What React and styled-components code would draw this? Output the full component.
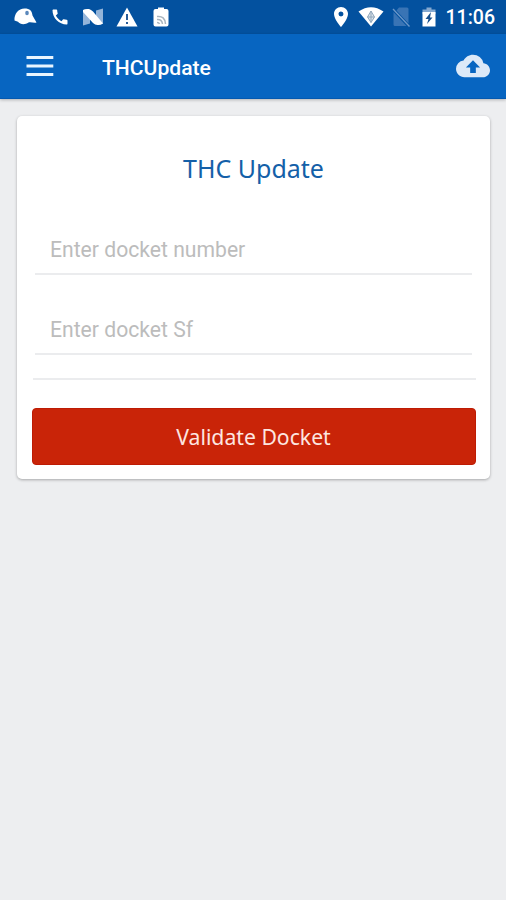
import React from "react";
import styled, { createGlobalStyle } from "styled-components";

import { MdBackup as UploadIcon } from "react-icons/md";
import { MdCall as CallIcon } from "react-icons/md";
import { MdLocationOn as LocationIcon } from "react-icons/md";

const GlobalStyle = createGlobalStyle`
  *, *::before, *::after {
    box-sizing: border-box;
  }

  body {
    margin: 0;
    background-color: #edeef0;
    font-family: "Noto Sans", sans-serif;
  }
`;

const Page = styled.div`
  min-height: 900px;
  background-color: #edeef0;
`;

const StatusBar = styled.div`
  height: 34px;
  display: flex;
  justify-content: space-between;
  padding: 0 11px 0 14px;
  background-color: #03519f;
  color: #fff;
`;

const StatusGroup = styled.div`
  display: flex;
  align-items: center;

  svg {
    display: block;
    flex: none;
  }
`;

const StatusSlot = styled.span`
  width: ${(props) => props.$width}px;
  display: flex;
  flex: none;
`;

const Clock = styled.span`
  padding-top: 2px;
  font-family: Roboto, sans-serif;
  font-size: 19.5px;
  font-weight: 500;
  line-height: 32px;
  white-space: nowrap;
`;

const Toolbar = styled.header`
  position: relative;
  height: 65px;
  display: flex;
  align-items: center;
  padding: 0 16px 0 26px;
  background-color: #0765c1;
  border-bottom: 1px solid #0459b0;
  box-shadow: 0 1px 3px rgba(0, 0, 0, 0.25);
  color: #fff;
`;

const IconButton = styled.button`
  display: flex;
  padding: 0;
  border: none;
  background: none;
  color: ${(props) => props.$color || "#fff"};
  cursor: pointer;
`;

const ToolbarTitle = styled.h1`
  flex: 1;
  margin: 0 0 0 48px;
  padding-top: 3px;
  font-family: Roboto, sans-serif;
  font-size: 21.1px;
  font-weight: 500;
  line-height: 30px;
`;

const Card = styled.main`
  margin: 17px 16px 0 17px;
  height: 363px;
  padding: 0 15px;
  background-color: #fff;
  border-radius: 5px;
  box-shadow: 0 1px 3px rgba(0, 0, 0, 0.3);
`;

const CardTitle = styled.h2`
  margin: 0;
  padding-top: 34px;
  height: 82px;
  color: #1460a8;
  font-size: 25px;
  font-weight: 400;
  line-height: 36px;
  text-align: center;
`;

const Field = styled.input`
  display: block;
  width: 437px;
  height: ${(props) => props.$height}px;
  margin-left: 3px;
  padding: ${(props) => props.$height - 50}px 15px 0;
  border: none;
  border-bottom: 2px solid #ebecee;
  outline: none;
  background: none;
  color: #333;
  font-family: Roboto, sans-serif;
  font-size: 21.15px;

  &::placeholder {
    color: #bcbcbc;
    opacity: 1;
  }
`;

const Divider = styled.hr`
  width: 443px;
  height: 2px;
  margin: 23px 0 28px 1px;
  border: none;
  background-color: #ebecee;
`;

const SubmitButton = styled.button`
  display: block;
  width: 444px;
  height: 57px;
  padding: 0 1px 0 0;
  border: 1px solid #bd1b04;
  border-radius: 4px;
  background-color: #c92408;
  color: #fde6e0;
  font-family: "Noto Sans", sans-serif;
  font-size: 21.2px;
  cursor: pointer;
`;

const CapIcon = () => (
  <svg width="24" height="18" viewBox="0 0 24 18">
    <path
      fill="#fff"
      d="M0.5 12.5C0 6 4.500 0.5 10.5 0.5C16 0.5 18 3 18.5 7.5L22.5 14.5C20 15.5 17 13.5 14.5 14.5C11 17 6 16.5 4 13.8Z"
    />
    <ellipse cx="13" cy="5" rx="1.8" ry="2.2" fill="#5b88bb" />
  </svg>
);

const NougatIcon = () => (
  <svg width="22" height="18" viewBox="0 0 22 18">
    <path fill="#93b4d9" d="M1 2L8 5V15.5L1 17.5ZM21 0.5V16L14 12V2.5Z" />
    <path
      fill="#fff"
      d="M1 2Q3 0.5 7 1Q9 1.5 11 3.5L21 15.5Q18 17.5 15.5 17Q13 17 11 15L1 4Z"
    />
  </svg>
);

const WarningIcon = () => (
  <svg width="22" height="20" viewBox="0 0 22 20">
    <path fill="#fff" d="M11 0.5L21.5 19.5H0.5Z" />
    <path fill="#285c99" d="M10 7H12V13H10ZM10 15H12V17H10Z" />
  </svg>
);

const CastBatteryIcon = () => (
  <svg width="16" height="20" viewBox="0 0 16 20">
    <path
      fill="#fff"
      d="M5 2V0.5H11V2H13.5Q15.5 2 15.5 4V17.5Q15.5 19.5 13.5 19.5H2.5Q0.5 19.5 0.5 17.5V4Q0.5 2 2.5 2Z"
    />
    <path
      fill="none"
      stroke="#a9b5bf"
      strokeWidth="1.5"
      d="M4 9.5Q12 8.500 12.5 17M4 12.500Q9 12 9.5 17M4 15.500Q6 15.500 6.500 17"
    />
  </svg>
);

const WifiIcon = () => (
  <svg width="26" height="20" viewBox="0 0 26 20">
    <path fill="#fff" d="M0.5 4.5Q13 -4 25.5 4.5L13 19.5Z" />
    <path
      fill="#dbe3ea"
      stroke="#8fa6bb"
      strokeWidth="1"
      d="M13 4L16.5 10L13 15.5L9.5 10ZM9.5 10H16.5M13 4V15.5"
    />
  </svg>
);

const NoSimIcon = () => (
  <svg width="20" height="20" viewBox="0 0 20 20">
    <path fill="#3974b5" d="M7 0.5H15Q16.5 0.5 16.5 2V16.5L4.5 3.5ZM1.5 5L14.5 19H3Q1.500 19 1.5 17.5Z" />
    <path stroke="#6d98c9" strokeWidth="1.3" d="M1 2L17.5 19.5" />
  </svg>
);

const ChargingIcon = () => (
  <svg width="14" height="20" viewBox="0 0 14 20">
    <path fill="#86a9d0" d="M4.5 0.5H9.5V2.5H13.5V7H0.5V2.5H4.5Z" />
    <path fill="#fff" d="M0.5 5H13.5V19.5H0.5Z" />
    <path fill="#174f8c" d="M9 5L3.500 12H6.500L5 17L10.500 10.500H8Z" />
  </svg>
);

const MenuIcon = () => (
  <svg width="28" height="20" viewBox="0 0 28 20">
    <path
      fill="#e9f5ff"
      d="M0.5 0H27.3V3H0.5ZM0.5 8.5H27.3V11.5H0.5ZM0.5 17H27.3V20H0.5Z"
    />
  </svg>
);

const App = () => {
  return (
    <>
      <GlobalStyle />
      <Page>
        <StatusBar>
          <StatusGroup>
            <StatusSlot $width={36}>
              <CapIcon />
            </StatusSlot>
            <StatusSlot $width={32}>
              <CallIcon size={20} />
            </StatusSlot>
            <StatusSlot $width={34}>
              <NougatIcon />
            </StatusSlot>
            <StatusSlot $width={37}>
              <WarningIcon />
            </StatusSlot>
            <CastBatteryIcon />
          </StatusGroup>
          <StatusGroup>
            <StatusSlot $width={29}>
              <LocationIcon size={24} />
            </StatusSlot>
            <StatusSlot $width={34}>
              <WifiIcon />
            </StatusSlot>
            <StatusSlot $width={30}>
              <NoSimIcon />
            </StatusSlot>
            <StatusSlot $width={24}>
              <ChargingIcon />
            </StatusSlot>
            <Clock>11:06</Clock>
          </StatusGroup>
        </StatusBar>

        <Toolbar>
          <IconButton aria-label="Menu">
            <MenuIcon />
          </IconButton>
          <ToolbarTitle>THCUpdate</ToolbarTitle>
          <IconButton aria-label="Upload" $color="#dce9f8">
            <UploadIcon size={34} />
          </IconButton>
        </Toolbar>

        <Card>
          <CardTitle>THC Update</CardTitle>
          <Field $height={77} placeholder="Enter docket number" />
          <Field $height={80} placeholder="Enter docket Sf" />
          <Divider />
          <SubmitButton>Validate Docket</SubmitButton>
        </Card>
      </Page>
    </>
  );
};

export default App;
